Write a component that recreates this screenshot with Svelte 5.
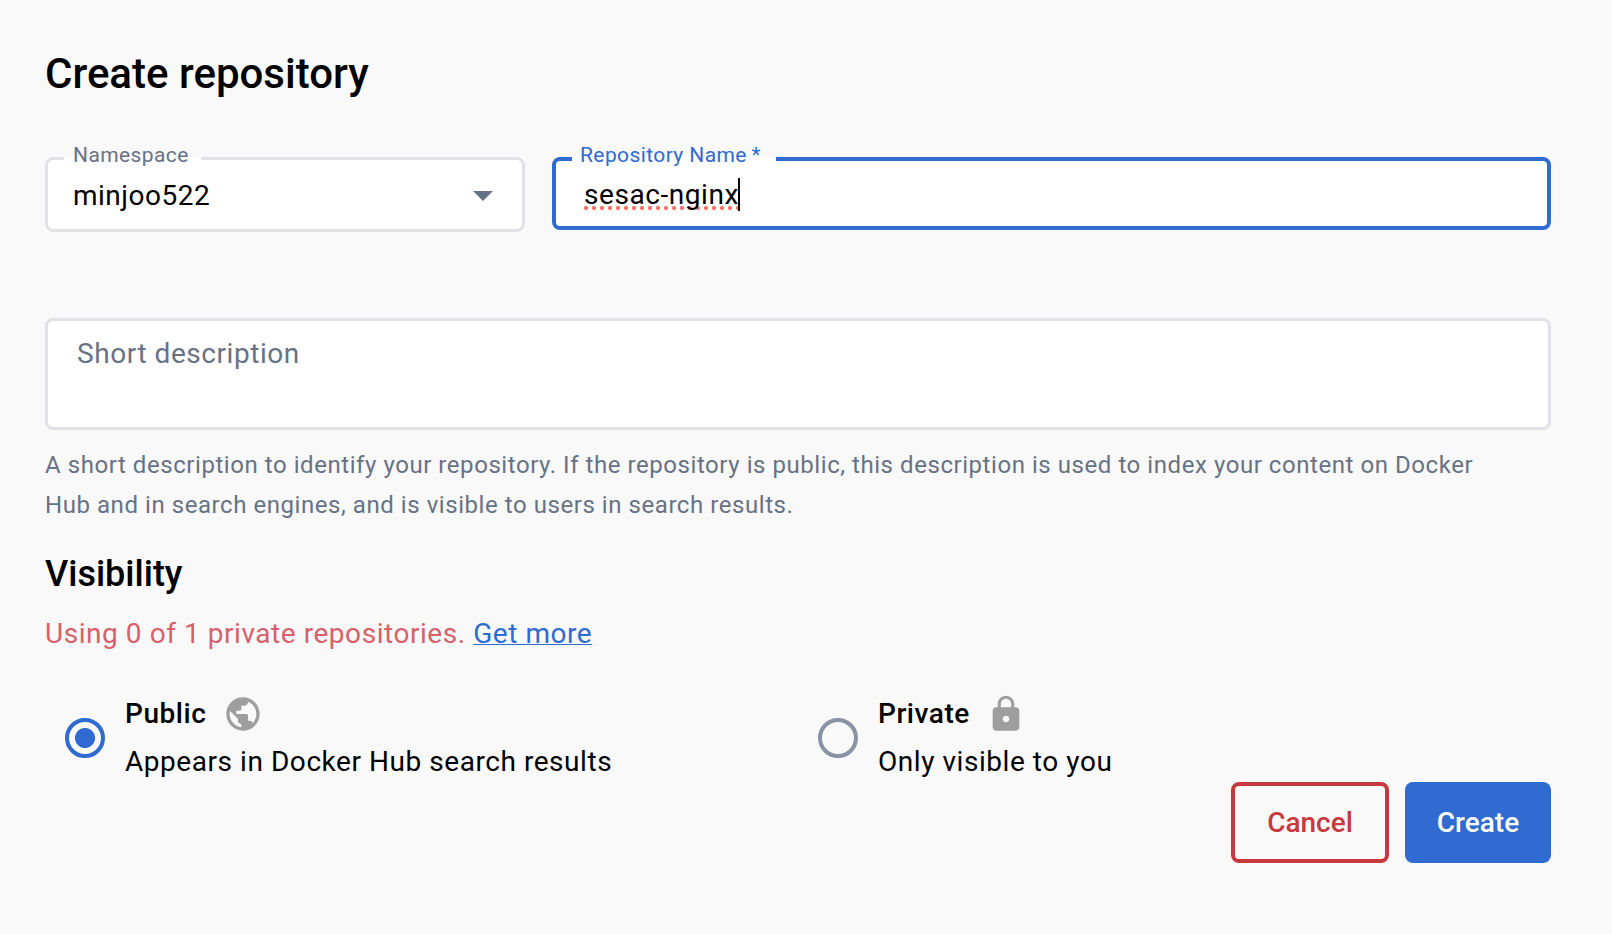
<script>
  let name = $state('sesac-nginx');
  let visibility = $state('public');
  const options = [
    { id: 'public', title: 'Public', note: 'Appears in Docker Hub search results' },
    { id: 'private', title: 'Private', note: 'Only visible to you' }
  ];
</script>

<main>
  <h1>Create repository</h1>

  <div class="fields">
    <div class="field namespace">
      <span class="label"><span>Namespace</span></span>
      <span class="value">minjoo522</span>
      <svg class="arrow" viewBox="0 0 20 10"><path d="M0 0h20L10 10z" /></svg>
    </div>
    <div class="field repo">
      <span class="label"><span>Repository Name&#8201;*</span></span>
      <span class="value typed">{name}</span>
    </div>
  </div>

  <div class="description">Short description</div>
  <p class="help">
    A short description to identify your repository. If the repository is public, this description is used to index your content on Docker Hub and in search engines, and is visible to users in search results.
  </p>

  <h2>Visibility</h2>
  <p class="usage">Using 0 of 1 private repositories. <a href="#more">Get more</a></p>

  <div class="options">
    {#each options as option}
      <div class="option" role="radio" tabindex="-1" aria-checked={visibility === option.id}>
        <span class="radio" class:checked={visibility === option.id}></span>
        <div class="text">
          <div class="title">
            <strong>{option.title}</strong>
            <svg class:lock={option.id === 'private'} viewBox="0 0 24 24">
              {#if option.id === 'public'}
                <path d="M12 2C6.48 2 2 6.48 2 12s4.48 10 10 10 10-4.48 10-10S17.52 2 12 2zm-1 17.93c-3.95-.49-7-3.85-7-7.93 0-.62.08-1.21.21-1.79L9 15v1c0 1.1.9 2 2 2v1.93zm6.9-2.54c-.26-.81-1-1.39-1.9-1.39h-1v-3c0-.55-.45-1-1-1H8v-2h2c.55 0 1-.45 1-1V7h2c1.1 0 2-.9 2-2v-.41c2.93 1.19 5 4.06 5 7.41 0 2.08-.8 3.97-2.1 5.39z" />
              {:else}
                <path d="M18 8h-1V6c0-2.76-2.24-5-5-5S7 3.24 7 6v2H6c-1.1 0-2 .9-2 2v10c0 1.1.9 2 2 2h12c1.1 0 2-.9 2-2V10c0-1.1-.9-2-2-2zm-6 9c-1.1 0-2-.9-2-2s.9-2 2-2 2 .9 2 2-.9 2-2 2zm3.1-9H8.9V6c0-1.71 1.39-3.1 3.1-3.1 1.71 0 3.1 1.39 3.1 3.1v2z" />
              {/if}
            </svg>
          </div>
          <div class="note">{option.note}</div>
        </div>
      </div>
    {/each}
  </div>

  <div class="actions">
    <button class="cancel">Cancel</button>
    <button class="create">Create</button>
  </div>
</main>

<style>
  :global(body) {
    background: #f9f9f9;
  }
  main {
    box-sizing: border-box;
    height: 934px;
    padding: 49px 61px 0 45px;
    font-family: Roboto, sans-serif;
    font-size: 28px;
    color: #000;
    overflow: hidden;
    -webkit-font-smoothing: antialiased;
  }
  h1, h2, p {
    margin: 0;
  }
  h1 {
    font-size: 42px;
    line-height: 50px;
    font-weight: 500;
  }
  .fields {
    display: flex;
    align-items: flex-start;
    gap: 27px;
    margin-top: 58px;
    height: 75px;
  }
  .field {
    position: relative;
    box-sizing: border-box;
    display: flex;
    align-items: flex-start;
    background: #fff;
  }
  .field::before {
    content: '';
    position: absolute;
    inset: 0;
    border: 3px solid #e1e2e6;
    border-radius: 8px;
  }
  .namespace {
    width: 480px;
    height: 75px;
    justify-content: space-between;
    padding: 19px 32px 0 28px;
  }
  .repo {
    flex: 1;
    height: 73px;
    padding: 18px 0 0 32px;
    border-radius: 8px;
  }
  .repo::before {
    border: 4px solid #2f6bd0;
  }
  .label {
    position: absolute;
    top: 0;
    left: 19px;
    width: 137px;
    height: 4px;
    background: #fff;
    color: #677285;
    font-size: 21px;
    letter-spacing: 0.4px;
    white-space: nowrap;
  }
  .label span {
    position: absolute;
    left: 9px;
    top: -14px;
    line-height: 24px;
  }
  .repo .label {
    left: 20px;
    width: 204px;
    color: #2f6bd0;
  }
  .repo .label span {
    left: 8px;
  }
  .value {
    position: relative;
    line-height: 40px;
    letter-spacing: 0.5px;
  }
  .typed {
    z-index: 0;
    letter-spacing: 0.56px;
  }
  .typed::before {
    content: '';
    position: absolute;
    z-index: -1;
    left: 0;
    top: 31px;
    width: 156px;
    height: 4px;
    background: radial-gradient(circle at 2px 2px, #f0776e 1.8px, transparent 2.4px) 0 0 / 8px 4px;
  }
  .typed::after {
    content: '';
    position: absolute;
    left: 154px;
    top: 3px;
    width: 2px;
    height: 33px;
    background: #000;
  }
  .arrow {
    width: 20px;
    height: 10px;
    margin-top: 15px;
    fill: #677285;
  }
  .description {
    box-sizing: border-box;
    margin-top: 86px;
    height: 112px;
    padding: 13px 29px 11px;
    border: 3px solid #e1e2e6;
    border-radius: 8px;
    background: #fff;
    color: #677285;
    line-height: 40px;
    letter-spacing: 0.55px;
  }
  .help {
    margin-top: 15px;
    padding-right: 40px;
    font-size: 24px;
    line-height: 40px;
    letter-spacing: 0.556px;
    color: #677285;
  }
  h2 {
    margin-top: 27px;
    font-size: 36px;
    line-height: 44px;
    font-weight: 500;
  }
  .usage {
    margin-top: 18px;
    line-height: 40px;
    letter-spacing: 0.55px;
    color: #d6616b;
  }
  a {
    color: #2f6bd0;
    text-decoration: underline;
    text-decoration-thickness: 1px;
  }
  .options {
    display: grid;
    grid-template-columns: 753px 1fr;
    margin-top: 36px;
    height: 92px;
  }
  .option {
    display: flex;
    padding-left: 20px;
  }
  .radio {
    box-sizing: border-box;
    flex: none;
    width: 40px;
    height: 40px;
    margin: 28px 20px 0 0;
    border: 4px solid #8993a5;
    border-radius: 50%;
  }
  .radio.checked {
    border-color: #2f6bd0;
    background: radial-gradient(circle, #2f6bd0 9.6px, transparent 10.4px);
  }
  .title {
    display: flex;
    align-items: flex-start;
    height: 48px;
    line-height: 48px;
  }
  .title svg {
    width: 40px;
    height: 40px;
    margin: 4px 0 0 17px;
    fill: #9e9e9e;
  }
  .title .lock {
    margin-left: 16px;
  }
  strong {
    font-weight: 500;
    letter-spacing: 0.55px;
  }
  .note {
    line-height: 48px;
    letter-spacing: 0.55px;
    white-space: nowrap;
  }
  .actions {
    display: flex;
    justify-content: flex-end;
    gap: 16px;
  }
  button {
    box-sizing: border-box;
    height: 81px;
    padding: 0;
    border-radius: 8px;
    font: 500 28px Roboto, sans-serif;
  }
  .cancel {
    width: 158px;
    border: 4px solid #c8393f;
    background: transparent;
    color: #c8393f;
  }
  .create {
    width: 146px;
    border: 0;
    background: #2f6bd0;
    color: #fff;
  }
</style>
